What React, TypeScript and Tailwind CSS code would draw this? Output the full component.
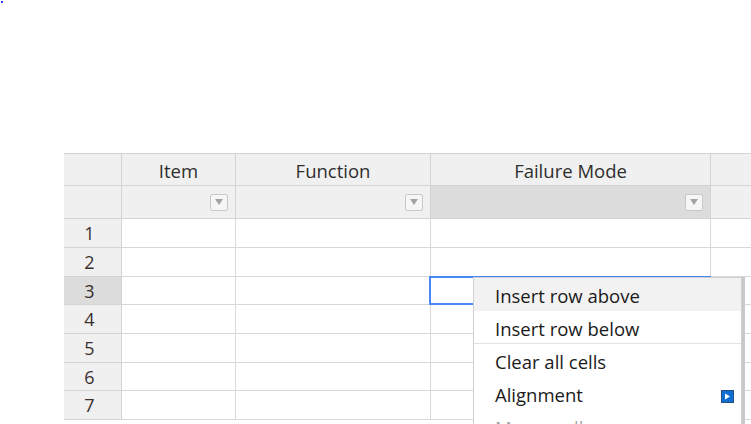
import React from "react";

function FilterBtn() {
  return (
    <div className="flex h-[17px] w-[18px] items-center justify-center rounded-[2px] border border-[#c8c8c8] bg-[#f6f6f6]">
      <svg width="8" height="6" viewBox="0 0 8 6">
        <polygon points="0,0 8,0 4,6" fill="#a3a3a3" />
      </svg>
    </div>
  );
}

const cols = ["Item", "Function", "Failure Mode", ""];
const rowHeights = ["h-[29px]", "h-[29px]", "h-[28px]", "h-[29px]", "h-[29px]", "h-[28px]", "h-[29px]"];

export default function App() {
  return (
    <div className="relative h-[424px] w-[751px] overflow-hidden bg-white font-['Open_Sans','Noto_Sans',sans-serif] text-[#333]">
      <div className="absolute left-[1px] top-[1px] h-[2px] w-[2px] bg-[#3a3aff]" />
      <div className="pl-[64px] pt-[153px]">
        <div className="grid w-max grid-cols-[58px_114px_195px_280px_100px] border-t border-[#d4d4d4]">
          {/* header row 1 */}
          <div className="h-[32px] border-b border-r border-[#d4d4d4] bg-[#f0f0f0]" />
          {cols.map((c, i) => (
            <div
              key={"h" + i}
              className="flex h-[32px] items-center justify-center border-b border-r border-[#d4d4d4] bg-[#f0f0f0] pt-[2px] text-[18.5px] text-[#2e2e2e]"
            >
              {c}
            </div>
          ))}
          {/* filter row */}
          <div className="h-[33px] border-b border-r border-[#d4d4d4] bg-[#f0f0f0]" />
          {cols.map((c, i) => (
            <div
              key={"f" + i}
              className={
                "flex h-[33px] items-center justify-end border-b border-r border-[#d4d4d4] pr-[7px] " +
                (i === 2 ? "bg-[#dcdcdc]" : "bg-[#f0f0f0]")
              }
            >
              {c !== "" && <FilterBtn />}
            </div>
          ))}
          {/* data rows */}
          {rowHeights.map((h, r) => (
            <React.Fragment key={"r" + r}>
              <div
                className={
                  "flex items-center justify-center border-b border-r border-[#d4d4d4] pr-[6px] pt-[1px] text-[18px] text-[#3a3030] " +
                  h +
                  (r === 2 ? " bg-[#dcdcdc]" : " bg-[#f0f0f0]")
                }
              >
                {r + 1}
              </div>
              {cols.map((_, i) => (
                <div key={"c" + r + i} className={"border-b border-r border-[#d8d8d8] bg-white " + h} />
              ))}
            </React.Fragment>
          ))}
        </div>
      </div>

      {/* selected cell */}
      <div className="absolute left-[429px] top-[276px] h-[29px] w-[282px] border-2 border-[#4a87f6]" />

      {/* context menu */}
      <div className="absolute left-[473px] top-[277px] w-[269px] border border-[#d0d0d0] bg-white text-[18.5px] text-[#1a1a1a] shadow-[3px_0_0_0_#c8c8c8]">
        <div className="flex h-[33px] items-center bg-[#f2f2f2] pl-[21px] pt-[3px]">Insert row above</div>
        <div className="flex h-[32px] items-center pl-[21px] pt-[3px]">Insert row below</div>
        <div className="h-px bg-[#e2e2e2]" />
        <div className="flex h-[33px] items-center pl-[21px] pt-[3px]">Clear all cells</div>
        <div className="flex h-[33px] items-center justify-between pl-[21px] pr-[7px] pt-[3px]">
          <span>Alignment</span>
          <svg width="13" height="13" viewBox="0 0 13 13" className="mt-[2px]">
            <rect x="0.5" y="0.5" width="12" height="12" fill="#0d6fd3" stroke="#29507a" />
            <polygon points="4,3.5 9,6.5 4,9.5" fill="#ffffff" />
          </svg>
        </div>
        <div className="flex h-[33px] items-center pl-[21px] pt-[3px] text-[#a6a6a6]">Merge cells</div>
      </div>
    </div>
  );
}
